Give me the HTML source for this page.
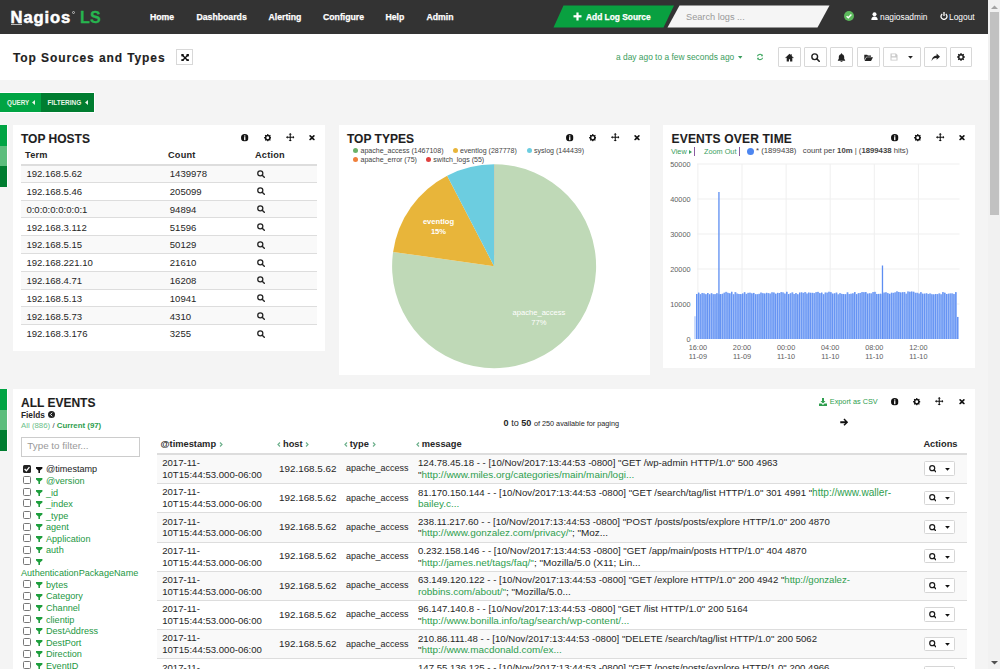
<!DOCTYPE html>
<html><head><meta charset="utf-8">
<style>
*{box-sizing:border-box}
html,body{margin:0;padding:0}
body{width:1000px;height:669px;overflow:hidden;position:relative;background:#f4f4f4;font-family:"Liberation Sans",sans-serif;color:#333}
.a{position:absolute;white-space:nowrap}
#hdr{position:absolute;left:0;top:0;width:988px;height:34px;background:#333}
.nav{position:absolute;top:12px;font-size:8.7px;font-weight:bold;color:#fff;line-height:11px;-webkit-text-stroke:0.25px #fff}
#title{position:absolute;left:0;top:34px;width:988px;height:45.6px;background:#fff}
.tb{position:absolute;top:13px;width:23px;height:20px;border:1px solid #d8d8d8;border-radius:1px;background:#fff}
.panel{position:absolute;background:#fff}
.gbar{position:absolute;left:0;width:7px}
.gbar div{height:20.5px}
.ptitle{position:absolute;font-size:12px;font-weight:bold;color:#1e1e1e;line-height:14px;-webkit-text-stroke:0.1px #1e1e1e}
.pic{position:absolute}
#sb{position:absolute;left:988px;top:0;width:12px;height:669px;background:#f1f1f1}
</style></head>
<body>
<svg width="0" height="0" style="position:absolute">
<defs>
<symbol id="i-info" viewBox="0 0 16 16"><circle cx="8" cy="8" r="8" fill="currentColor"/><rect x="6.6" y="3" width="2.8" height="2.6" fill="#fff"/><rect x="6.6" y="6.6" width="2.8" height="6.6" fill="#fff"/></symbol>
<symbol id="i-gear" viewBox="0 0 16 16"><path fill="currentColor" fill-rule="evenodd" d="M6.63 1.85 L6.96 0.07 L9.04 0.07 L9.37 1.85 L11.38 2.68 L12.88 1.66 L14.34 3.12 L13.32 4.62 L14.15 6.63 L15.93 6.96 L15.93 9.04 L14.15 9.37 L13.32 11.38 L14.34 12.88 L12.88 14.34 L11.38 13.32 L9.37 14.15 L9.04 15.93 L6.96 15.93 L6.63 14.15 L4.62 13.32 L3.12 14.34 L1.66 12.88 L2.68 11.38 L1.85 9.37 L0.07 9.04 L0.07 6.96 L1.85 6.63 L2.68 4.62 L1.66 3.12 L3.12 1.66 L4.62 2.68ZM8 5a3 3 0 1 0 0 6a3 3 0 1 0 0-6z"/></symbol>
<symbol id="i-move" viewBox="0 0 16 16"><path fill="currentColor" d="M8 0l3 3H9v4h4V5l3 3-3 3V9H9v4h2l-3 3-3-3h2V9H3v2L0 8l3-3v2h4V3H5z"/></symbol>
<symbol id="i-times" viewBox="0 0 16 16"><path d="M2.5 2.5L13.5 13.5M13.5 2.5L2.5 13.5" stroke="currentColor" stroke-width="4.6" stroke-linecap="round"/></symbol>
<symbol id="i-search" viewBox="0 0 16 16"><circle cx="6.6" cy="6.6" r="5.1" stroke="currentColor" stroke-width="2.5" fill="none"/><path d="M10.4 10.4l4.2 4.2" stroke="currentColor" stroke-width="2.8" stroke-linecap="round"/></symbol>
<symbol id="i-home" viewBox="0 0 16 16"><path fill="currentColor" d="M8 1.5L0.5 8.3 1.6 9.4 3 8.2V15h4v-4h2v4h4V8.2l1.4 1.2 1.1-1.1L12 5.2V2h-2v1.4z"/></symbol>
<symbol id="i-bell" viewBox="0 0 16 16"><path fill="currentColor" d="M8 0.5c.7 0 1 .4 1 1v.6c2.4.5 3.8 2.5 3.8 5v3.3l1.7 2.4v1H1.5v-1l1.7-2.4V7.1c0-2.5 1.4-4.5 3.8-5v-.6c0-.6.3-1 1-1zM6.2 14.6h3.6A1.8 1.8 0 0 1 6.2 14.6z"/></symbol>
<symbol id="i-folder" viewBox="0 0 16 16"><path fill="currentColor" d="M0.5 3h5l1.5 1.5h5.5v2H4L0.5 13zM4.5 7.5H16l-3.5 6.5H1z"/></symbol>
<symbol id="i-save" viewBox="0 0 16 16"><path fill="currentColor" fill-rule="evenodd" d="M1 1h11l3 3v11H1zM3.5 2.5v4h7v-4zM3 9v4.5h10V9z"/></symbol>
<symbol id="i-share" viewBox="0 0 16 16"><path fill="currentColor" d="M10 1l6 5.5-6 5.5V8.8C5.5 8.5 3 10 1 14.5 1.3 8.5 4.5 4.7 10 4.3z"/></symbol>
<symbol id="i-caret" viewBox="0 0 8 5"><path fill="currentColor" d="M0 0h8L4 4.5z"/></symbol>
<symbol id="i-refresh" viewBox="0 0 16 16"><path fill="currentColor" d="M13.6 2.4V6.6H9.4l1.6-1.6A4.3 4.3 0 0 0 3.9 6.6H1.7A6.4 6.4 0 0 1 12.5 3.5zM2.4 13.6V9.4h4.2L5 11a4.3 4.3 0 0 0 7.1-1.6h2.2a6.4 6.4 0 0 1-10.8 3.1z"/></symbol>
<symbol id="i-expand" viewBox="0 0 16 16"><path d="M3 3L13 13M13 3L3 13" stroke="currentColor" stroke-width="2.8"/><rect x="0" y="0" width="5" height="5" fill="currentColor"/><rect x="11" y="0" width="5" height="5" fill="currentColor"/><rect x="0" y="11" width="5" height="5" fill="currentColor"/><rect x="11" y="11" width="5" height="5" fill="currentColor"/></symbol>
<symbol id="i-filter" viewBox="0 0 16 16"><path fill="currentColor" d="M0.5 1h15v2L10 8.5V15L6 13V8.5L0.5 3z"/></symbol>
<symbol id="i-download" viewBox="0 0 16 16"><path fill="currentColor" d="M6 0h4v6h3l-5 5-5-5h3zM0 11h5l3 3 3-3h5v5H0z"/></symbol>
<symbol id="i-arrow" viewBox="0 0 16 16"><path fill="currentColor" d="M0.5 6.2h9.3L6.6 3 8.6 1l7 7-7 7-2-2 3.2-3.2H0.5z"/></symbol>
<symbol id="i-chev" viewBox="0 0 16 16"><path fill="currentColor" d="M5 1.5L11.5 8 5 14.5 3.2 12.7 7.9 8 3.2 3.3z"/></symbol>
<symbol id="i-circleleft" viewBox="0 0 16 16"><circle cx="8" cy="8" r="8" fill="currentColor"/><path d="M9.5 4L5.5 8l4 4" stroke="#fff" stroke-width="2.2" fill="none"/></symbol>
</defs></svg>
<!-- HEADER -->
<div id="hdr">
  <div class="a" style="left:10.5px;top:7.5px;font-size:16.6px;font-weight:bold;color:#fff;letter-spacing:0.9px;line-height:20px;-webkit-text-stroke:0.5px #fff">Nagios</div>
  <div class="a" style="left:72px;top:10.5px;width:3px;height:3px;border-radius:50%;border:0.8px solid #bbb"></div><div class="a" style="left:11px;top:23.5px;width:11px;height:1px;background:#bbb"></div>
  <div class="a" style="left:80px;top:8px;font-size:16px;font-weight:bold;color:#27b44f;letter-spacing:0.2px;line-height:20px;-webkit-text-stroke:0.3px #27b44f">LS</div>
  <div class="nav a" style="left:150px">Home</div>
  <div class="nav a" style="left:196.5px">Dashboards</div>
  <div class="nav a" style="left:268.5px">Alerting</div>
  <div class="nav a" style="left:323px">Configure</div>
  <div class="nav a" style="left:385.5px">Help</div>
  <div class="nav a" style="left:426.5px">Admin</div>
  <svg class="a" style="left:553px;top:5px" width="280" height="23">
    <polygon points="10.5,0.5 121,0.5 110.5,22.5 0.5,22.5" fill="#09a040"/>
    <polygon points="126.5,0.5 276.5,0.5 264.5,22.5 114.5,22.5" fill="#f5f5f5"/>
    <rect x="20.5" y="10.2" width="8" height="2.2" fill="#fff"/><rect x="23.4" y="7.5" width="2.2" height="8" fill="#fff"/>
  </svg>
  <div class="a" style="left:586px;top:12.3px;font-size:8.4px;font-weight:bold;color:#fff;line-height:11px;-webkit-text-stroke:0.25px #fff">Add Log Source</div>
  <div class="a" style="left:686px;top:10.7px;font-size:9.2px;color:#999;line-height:13px">Search logs ...</div>
  <svg class="a" style="left:844px;top:11px" width="10" height="10"><circle cx="5" cy="5" r="5" fill="#5cb85c"/><path d="M2.6 5.2 L4.3 6.8 L7.4 3.6" stroke="#fff" stroke-width="1.4" fill="none"/></svg>
  <svg class="a" style="left:871px;top:12px" width="7" height="8"><circle cx="3.5" cy="2.2" r="2" fill="#fff"/><path d="M0.3 8 Q0.3 4.5 3.5 4.5 Q6.7 4.5 6.7 8 Z" fill="#fff"/></svg>
  <div class="a" style="left:880px;top:11.5px;font-size:8.4px;color:#fff;line-height:11px">nagiosadmin</div>
  <svg class="a" style="left:940px;top:12px" width="8" height="8"><path d="M2.2 2 A3 3 0 1 0 5.8 2" stroke="#fff" stroke-width="1.3" fill="none"/><rect x="3.35" y="0" width="1.3" height="4" fill="#fff"/></svg>
  <div class="a" style="left:949px;top:11.5px;font-size:8.4px;color:#fff;line-height:11px">Logout</div>
</div>
<!-- TITLE BAR -->
<div id="title">
  <div class="a" style="left:13px;top:17px;font-size:12px;font-weight:bold;color:#1e1e1e;letter-spacing:0.9px;line-height:14px;-webkit-text-stroke:0.15px #1e1e1e">Top Sources and Types</div>
  <div class="a" style="left:176px;top:15px;width:17px;height:16px;border:1px solid #d8d8d8;background:#fff"><svg class="a" style="left:3.8px;top:3.6px;color:#111" width="8.2" height="7.6"><use href="#i-expand"/></svg></div>
  <svg class="a" style="left:738px;top:21.5px;color:#3a9d5d" width="4.5" height="3"><use href="#i-caret"/></svg>
  <svg class="a" style="left:756px;top:19px;color:#3aa55d" width="8" height="8"><use href="#i-refresh"/></svg>
  <div class="tb" style="left:778px"><svg class="a" style="left:6px;top:5px;color:#222" width="9" height="9"><use href="#i-home"/></svg></div>
  <div class="tb" style="left:804px"><svg class="a" style="left:6px;top:5px;color:#222" width="9" height="9"><use href="#i-search"/></svg></div>
  <div class="tb" style="left:830px"><svg class="a" style="left:6px;top:5px;color:#222" width="9" height="9"><use href="#i-bell"/></svg></div>
  <div class="tb" style="left:856.5px"><svg class="a" style="left:6px;top:5px;color:#222" width="9" height="9"><use href="#i-folder"/></svg></div>
  <div class="tb" style="left:883px;width:37.5px"><svg class="a" style="left:6px;top:5px;color:#c8c8c8" width="8" height="8"><use href="#i-save"/></svg><svg class="a" style="left:24px;top:8px;color:#222" width="5" height="3"><use href="#i-caret"/></svg></div>
  <div class="tb" style="left:924px"><svg class="a" style="left:6px;top:5px;color:#222" width="9" height="9"><use href="#i-share"/></svg></div>
  <div class="tb" style="left:950px;width:22px"><svg class="a" style="left:6px;top:5px;color:#222" width="8" height="8"><use href="#i-gear"/></svg></div>
  <div class="a" style="left:616px;top:18px;font-size:8.4px;color:#3a9d5d;line-height:11px">a day ago to a few seconds ago</div>
</div>
<!-- QUERY FILTERING -->
<div class="a" style="left:0;top:92px;width:95px;height:21px;background:#fff"></div>
<div class="a" style="left:0;top:93px;width:41px;height:19px;background:#00a443"></div>
<div class="a" style="left:41px;top:93px;width:53px;height:19px;background:#007d30"></div>
<div class="a" style="left:7px;top:99px;font-size:6.3px;font-weight:bold;color:#e8f5e8;line-height:8px">QUERY</div>
<svg class="a" style="left:32px;top:100px;color:#e8f5e8" width="3" height="5"><path d="M3 0v5L0 2.5z" fill="currentColor"/></svg>
<div class="a" style="left:47.5px;top:99px;font-size:6.5px;font-weight:bold;color:#e8f5e8;line-height:8px">FILTERING</div>
<svg class="a" style="left:85px;top:100px;color:#e8f5e8" width="3" height="5"><path d="M3 0v5L0 2.5z" fill="currentColor"/></svg>
<!-- green side bars -->
<div class="gbar" style="top:124.5px;background:#fff;width:8px;height:62px"></div>
<div class="gbar" style="top:125px;height:61px"><div style="background:#00a443"></div><div style="background:#5cbd7c"></div><div style="background:#007d30"></div></div>
<div class="gbar" style="top:388.5px;background:#fff;width:8px;height:62px"></div>
<div class="gbar" style="top:389px;height:61px"><div style="background:#00a443"></div><div style="background:#5cbd7c"></div><div style="background:#007d30"></div></div>
<!-- PANELS -->
<div class="panel" style="left:13px;top:125px;width:312px;height:226px">
<div class="ptitle a" style="left:8px;top:7px">TOP HOSTS</div>
<svg class="a" style="left:228px;top:9px;color:#111" width="7.5" height="7.5"><use href="#i-info"/></svg><svg class="a" style="left:250.5px;top:9px;color:#111" width="7.5" height="7.5"><use href="#i-gear"/></svg><svg class="a" style="left:273.0px;top:8px;color:#111" width="8.5" height="8.5"><use href="#i-move"/></svg><svg class="a" style="left:296.2px;top:10px;color:#111" width="6" height="5.5"><use href="#i-times"/></svg>
<div class="a" style="left:12px;top:24.5px;font-size:9.2px;font-weight:bold;color:#262626;letter-spacing:0.2px;line-height:11px">Term</div>
<div class="a" style="left:155px;top:24.5px;font-size:9.2px;font-weight:bold;color:#262626;letter-spacing:0.2px;line-height:11px">Count</div>
<div class="a" style="left:242px;top:24.5px;font-size:9.2px;font-weight:bold;color:#262626;letter-spacing:0.2px;line-height:11px">Action</div>
<div class="a" style="left:8px;top:39px;width:296px;height:2px;background:#ddd"></div>
<div class="a" style="left:8px;top:41px;width:296px;height:16px;background:#f9f9f9"></div>
<div class="a" style="left:13.4px;top:43.10px;font-size:9.55px;color:#262626;line-height:11px">192.168.5.62</div>
<div class="a" style="left:156.8px;top:43.10px;font-size:9.55px;color:#262626;line-height:11px">1439978</div>
<svg class="a" style="left:244px;top:44.50px;color:#222" width="8" height="8"><use href="#i-search"/></svg>
<div class="a" style="left:8px;top:56.80px;width:296px;height:17.8px;background:#fff;border-top:1px solid #ddd"></div>
<div class="a" style="left:13.4px;top:60.90px;font-size:9.55px;color:#262626;line-height:11px">192.168.5.46</div>
<div class="a" style="left:156.8px;top:60.90px;font-size:9.55px;color:#262626;line-height:11px">205099</div>
<svg class="a" style="left:244px;top:62.30px;color:#222" width="8" height="8"><use href="#i-search"/></svg>
<div class="a" style="left:8px;top:74.60px;width:296px;height:17.8px;background:#f9f9f9;border-top:1px solid #ddd"></div>
<div class="a" style="left:13.4px;top:78.70px;font-size:9.55px;color:#262626;line-height:11px">0:0:0:0:0:0:0:1</div>
<div class="a" style="left:156.8px;top:78.70px;font-size:9.55px;color:#262626;line-height:11px">94894</div>
<svg class="a" style="left:244px;top:80.10px;color:#222" width="8" height="8"><use href="#i-search"/></svg>
<div class="a" style="left:8px;top:92.40px;width:296px;height:17.8px;background:#fff;border-top:1px solid #ddd"></div>
<div class="a" style="left:13.4px;top:96.50px;font-size:9.55px;color:#262626;line-height:11px">192.168.3.112</div>
<div class="a" style="left:156.8px;top:96.50px;font-size:9.55px;color:#262626;line-height:11px">51596</div>
<svg class="a" style="left:244px;top:97.90px;color:#222" width="8" height="8"><use href="#i-search"/></svg>
<div class="a" style="left:8px;top:110.20px;width:296px;height:17.8px;background:#f9f9f9;border-top:1px solid #ddd"></div>
<div class="a" style="left:13.4px;top:114.30px;font-size:9.55px;color:#262626;line-height:11px">192.168.5.15</div>
<div class="a" style="left:156.8px;top:114.30px;font-size:9.55px;color:#262626;line-height:11px">50129</div>
<svg class="a" style="left:244px;top:115.70px;color:#222" width="8" height="8"><use href="#i-search"/></svg>
<div class="a" style="left:8px;top:128.00px;width:296px;height:17.8px;background:#fff;border-top:1px solid #ddd"></div>
<div class="a" style="left:13.4px;top:132.10px;font-size:9.55px;color:#262626;line-height:11px">192.168.221.10</div>
<div class="a" style="left:156.8px;top:132.10px;font-size:9.55px;color:#262626;line-height:11px">21610</div>
<svg class="a" style="left:244px;top:133.50px;color:#222" width="8" height="8"><use href="#i-search"/></svg>
<div class="a" style="left:8px;top:145.80px;width:296px;height:17.8px;background:#f9f9f9;border-top:1px solid #ddd"></div>
<div class="a" style="left:13.4px;top:149.90px;font-size:9.55px;color:#262626;line-height:11px">192.168.4.71</div>
<div class="a" style="left:156.8px;top:149.90px;font-size:9.55px;color:#262626;line-height:11px">16208</div>
<svg class="a" style="left:244px;top:151.30px;color:#222" width="8" height="8"><use href="#i-search"/></svg>
<div class="a" style="left:8px;top:163.60px;width:296px;height:17.8px;background:#fff;border-top:1px solid #ddd"></div>
<div class="a" style="left:13.4px;top:167.70px;font-size:9.55px;color:#262626;line-height:11px">192.168.5.13</div>
<div class="a" style="left:156.8px;top:167.70px;font-size:9.55px;color:#262626;line-height:11px">10941</div>
<svg class="a" style="left:244px;top:169.10px;color:#222" width="8" height="8"><use href="#i-search"/></svg>
<div class="a" style="left:8px;top:181.40px;width:296px;height:17.8px;background:#f9f9f9;border-top:1px solid #ddd"></div>
<div class="a" style="left:13.4px;top:185.50px;font-size:9.55px;color:#262626;line-height:11px">192.168.5.73</div>
<div class="a" style="left:156.8px;top:185.50px;font-size:9.55px;color:#262626;line-height:11px">4310</div>
<svg class="a" style="left:244px;top:186.90px;color:#222" width="8" height="8"><use href="#i-search"/></svg>
<div class="a" style="left:8px;top:199.20px;width:296px;height:17.8px;background:#fff;border-top:1px solid #ddd"></div>
<div class="a" style="left:13.4px;top:203.30px;font-size:9.55px;color:#262626;line-height:11px">192.168.3.176</div>
<div class="a" style="left:156.8px;top:203.30px;font-size:9.55px;color:#262626;line-height:11px">3255</div>
<svg class="a" style="left:244px;top:204.70px;color:#222" width="8" height="8"><use href="#i-search"/></svg>
</div>
<div class="panel" style="left:339px;top:125px;width:311px;height:250px">
<div class="ptitle a" style="left:8px;top:7px">TOP TYPES</div>
<svg class="a" style="left:227px;top:9px;color:#111" width="7.5" height="7.5"><use href="#i-info"/></svg><svg class="a" style="left:249.5px;top:9px;color:#111" width="7.5" height="7.5"><use href="#i-gear"/></svg><svg class="a" style="left:272.0px;top:8px;color:#111" width="8.5" height="8.5"><use href="#i-move"/></svg><svg class="a" style="left:295.2px;top:10px;color:#111" width="6" height="5.5"><use href="#i-times"/></svg>
<div class="a" style="left:14.0px;top:23.099999999999994px;width:5px;height:5px;border-radius:50%;background:#6ab167"></div>
<div class="a" style="left:21.5px;top:21.099999999999994px;font-size:7.05px;color:#444;line-height:9px">apache_access (1467108)</div>
<div class="a" style="left:113.5px;top:23.099999999999994px;width:5px;height:5px;border-radius:50%;background:#e8b53a"></div>
<div class="a" style="left:121px;top:21.099999999999994px;font-size:7.05px;color:#444;line-height:9px">eventlog (287778)</div>
<div class="a" style="left:187.5px;top:23.099999999999994px;width:5px;height:5px;border-radius:50%;background:#6ccde0"></div>
<div class="a" style="left:195px;top:21.099999999999994px;font-size:7.05px;color:#444;line-height:9px">syslog (144439)</div>
<div class="a" style="left:14.0px;top:31.80000000000001px;width:5px;height:5px;border-radius:50%;background:#f07f3b"></div>
<div class="a" style="left:21.5px;top:29.80000000000001px;font-size:7.05px;color:#444;line-height:9px">apache_error (75)</div>
<div class="a" style="left:86.80000000000001px;top:31.80000000000001px;width:5px;height:5px;border-radius:50%;background:#e0413f"></div>
<div class="a" style="left:94.30000000000001px;top:29.80000000000001px;font-size:7.05px;color:#444;line-height:9px">switch_logs (55)</div>
<svg class="a" style="left:0;top:0" width="311" height="250"><path d="M155.10,141.20 L155.10,39.20 A102,102 0 1 1 54.11,126.90 Z" fill="#bfd9b7"/><path d="M155.10,141.20 L54.11,126.90 A102,102 0 0 1 108.16,50.64 Z" fill="#e8b53a"/><path d="M155.10,141.20 L108.16,50.64 A102,102 0 0 1 155.06,39.20 Z" fill="#6ccde0"/><path d="M155.10,141.20 L155.06,39.20 A102,102 0 0 1 155.08,39.20 Z" fill="#f07f3b"/><path d="M155.10,141.20 L155.08,39.20 A102,102 0 0 1 155.10,39.20 Z" fill="#e0413f"/></svg>
<div class="a" style="left:69.5px;width:60px;text-align:center;top:91.80000000000001px;font-size:7.6px;font-weight:bold;color:#fff;line-height:10px">eventlog<br>15%</div>
<div class="a" style="left:159.89999999999998px;width:80px;text-align:center;top:182.89999999999998px;font-size:7.6px;color:#fff;line-height:10px">apache_access<br>77%</div>
</div>
<div class="panel" style="left:663px;top:125px;width:312px;height:243px">
<div class="ptitle a" style="left:8.5px;top:7px;letter-spacing:0.2px">EVENTS OVER TIME</div>
<svg class="a" style="left:228px;top:9px;color:#111" width="7.5" height="7.5"><use href="#i-info"/></svg><svg class="a" style="left:250.5px;top:9px;color:#111" width="7.5" height="7.5"><use href="#i-gear"/></svg><svg class="a" style="left:273.0px;top:8px;color:#111" width="8.5" height="8.5"><use href="#i-move"/></svg><svg class="a" style="left:296.2px;top:10px;color:#111" width="6" height="5.5"><use href="#i-times"/></svg>
<div class="a" style="left:8px;top:22px;font-size:7.3px;color:#3a9d5d;line-height:9px">View</div>
<svg class="a" style="left:25.5px;top:24.5px;color:#3a9d5d" width="3" height="4"><path d="M0 0v4l3-2z" fill="currentColor"/></svg>
<div class="a" style="left:30.8px;top:22px;width:1px;height:9px;background:#8a5aa0"></div>
<div class="a" style="left:41px;top:22px;font-size:7.3px;color:#3a9d5d;line-height:9px">Zoom Out</div>
<div class="a" style="left:76px;top:22px;width:1px;height:9px;background:#8a5aa0"></div>
<div class="a" style="left:83.5px;top:23px;width:7px;height:7px;border-radius:50%;background:#4d86f0"></div>
<div class="a" style="left:93px;top:21.3px;font-size:7.73px;color:#444;line-height:9px">* (1899438) &nbsp; count per <b>10m</b> | (<b>1899438</b> hits)</div>
<svg class="a" style="left:0;top:0" width="312" height="243"><line x1="34" y1="179.0" x2="296.5" y2="179.0" stroke="#efefef" stroke-width="1"/><line x1="34" y1="144.0" x2="296.5" y2="144.0" stroke="#efefef" stroke-width="1"/><line x1="34" y1="109.0" x2="296.5" y2="109.0" stroke="#efefef" stroke-width="1"/><line x1="34" y1="74.0" x2="296.5" y2="74.0" stroke="#efefef" stroke-width="1"/><line x1="34" y1="39.0" x2="296.5" y2="39.0" stroke="#efefef" stroke-width="1"/><line x1="34.9" y1="39.0" x2="34.9" y2="214" stroke="#efefef" stroke-width="1"/><line x1="79.0" y1="39.0" x2="79.0" y2="214" stroke="#efefef" stroke-width="1"/><line x1="123.1" y1="39.0" x2="123.1" y2="214" stroke="#efefef" stroke-width="1"/><line x1="167.2" y1="39.0" x2="167.2" y2="214" stroke="#efefef" stroke-width="1"/><line x1="211.3" y1="39.0" x2="211.3" y2="214" stroke="#efefef" stroke-width="1"/><line x1="255.4" y1="39.0" x2="255.4" y2="214" stroke="#efefef" stroke-width="1"/><g fill="#97b7f8"><rect x="31.50" y="191.25" width="1" height="22.75"/><rect x="33.04" y="168.98" width="1.84" height="45.02"/><rect x="34.88" y="167.67" width="1.84" height="46.33"/><rect x="36.71" y="169.18" width="1.84" height="44.82"/><rect x="38.55" y="167.97" width="1.84" height="46.03"/><rect x="40.39" y="168.42" width="1.84" height="45.58"/><rect x="42.23" y="169.22" width="1.84" height="44.78"/><rect x="44.06" y="168.04" width="1.84" height="45.96"/><rect x="45.90" y="169.28" width="1.84" height="44.72"/><rect x="47.74" y="168.24" width="1.84" height="45.76"/><rect x="49.58" y="169.19" width="1.84" height="44.81"/><rect x="51.41" y="169.14" width="1.84" height="44.86"/><rect x="53.25" y="168.26" width="1.84" height="45.74"/><rect x="55.09" y="169.20" width="1.84" height="44.80"/><rect x="56.93" y="169.05" width="1.84" height="44.95"/><rect x="58.76" y="168.79" width="1.84" height="45.21"/><rect x="60.60" y="167.73" width="1.84" height="46.27"/><rect x="62.44" y="166.89" width="1.84" height="47.11"/><rect x="64.28" y="167.86" width="1.84" height="46.14"/><rect x="66.11" y="168.33" width="1.84" height="45.67"/><rect x="67.95" y="166.81" width="1.84" height="47.19"/><rect x="69.79" y="169.25" width="1.84" height="44.75"/><rect x="71.63" y="167.12" width="1.84" height="46.88"/><rect x="73.46" y="168.61" width="1.84" height="45.39"/><rect x="75.30" y="169.00" width="1.84" height="45.00"/><rect x="77.14" y="169.07" width="1.84" height="44.93"/><rect x="78.98" y="168.57" width="1.84" height="45.43"/><rect x="80.81" y="167.23" width="1.84" height="46.77"/><rect x="82.65" y="168.90" width="1.84" height="45.10"/><rect x="84.49" y="167.85" width="1.84" height="46.15"/><rect x="86.33" y="167.70" width="1.84" height="46.30"/><rect x="88.16" y="168.40" width="1.84" height="45.60"/><rect x="90.00" y="167.94" width="1.84" height="46.06"/><rect x="91.84" y="169.21" width="1.84" height="44.79"/><rect x="93.68" y="169.22" width="1.84" height="44.78"/><rect x="95.51" y="168.83" width="1.84" height="45.17"/><rect x="97.35" y="167.59" width="1.84" height="46.41"/><rect x="99.19" y="168.25" width="1.84" height="45.75"/><rect x="101.03" y="168.55" width="1.84" height="45.45"/><rect x="102.86" y="167.84" width="1.84" height="46.16"/><rect x="104.70" y="168.19" width="1.84" height="45.81"/><rect x="106.54" y="168.59" width="1.84" height="45.41"/><rect x="108.38" y="167.29" width="1.84" height="46.71"/><rect x="110.21" y="167.54" width="1.84" height="46.46"/><rect x="112.05" y="168.73" width="1.84" height="45.27"/><rect x="113.89" y="167.87" width="1.84" height="46.13"/><rect x="115.73" y="168.00" width="1.84" height="46.00"/><rect x="117.56" y="167.08" width="1.84" height="46.92"/><rect x="119.40" y="167.46" width="1.84" height="46.54"/><rect x="121.24" y="168.62" width="1.84" height="45.38"/><rect x="123.08" y="166.80" width="1.84" height="47.20"/><rect x="124.91" y="169.07" width="1.84" height="44.93"/><rect x="126.75" y="168.28" width="1.84" height="45.72"/><rect x="128.59" y="167.39" width="1.84" height="46.61"/><rect x="130.43" y="168.98" width="1.84" height="45.02"/><rect x="132.26" y="168.09" width="1.84" height="45.91"/><rect x="134.10" y="169.27" width="1.84" height="44.73"/><rect x="135.94" y="167.62" width="1.84" height="46.38"/><rect x="137.78" y="167.37" width="1.84" height="46.63"/><rect x="139.61" y="167.87" width="1.84" height="46.13"/><rect x="141.45" y="167.08" width="1.84" height="46.92"/><rect x="143.29" y="168.55" width="1.84" height="45.45"/><rect x="145.13" y="167.55" width="1.84" height="46.45"/><rect x="146.96" y="167.81" width="1.84" height="46.19"/><rect x="148.80" y="167.85" width="1.84" height="46.15"/><rect x="150.64" y="168.18" width="1.84" height="45.82"/><rect x="152.48" y="167.17" width="1.84" height="46.83"/><rect x="154.31" y="166.90" width="1.84" height="47.10"/><rect x="156.15" y="168.13" width="1.84" height="45.87"/><rect x="157.99" y="167.63" width="1.84" height="46.37"/><rect x="159.83" y="169.22" width="1.84" height="44.78"/><rect x="161.66" y="167.53" width="1.84" height="46.47"/><rect x="163.50" y="167.68" width="1.84" height="46.32"/><rect x="165.34" y="166.77" width="1.84" height="47.23"/><rect x="167.18" y="167.22" width="1.84" height="46.78"/><rect x="169.01" y="168.63" width="1.84" height="45.37"/><rect x="170.85" y="168.36" width="1.84" height="45.64"/><rect x="172.69" y="167.62" width="1.84" height="46.38"/><rect x="174.53" y="169.32" width="1.84" height="44.68"/><rect x="176.36" y="168.16" width="1.84" height="45.84"/><rect x="178.20" y="168.93" width="1.84" height="45.07"/><rect x="180.04" y="169.07" width="1.84" height="44.93"/><rect x="181.88" y="169.22" width="1.84" height="44.78"/><rect x="183.71" y="167.36" width="1.84" height="46.64"/><rect x="185.55" y="169.04" width="1.84" height="44.96"/><rect x="187.39" y="168.73" width="1.84" height="45.27"/><rect x="189.23" y="168.35" width="1.84" height="45.65"/><rect x="191.06" y="167.09" width="1.84" height="46.91"/><rect x="192.90" y="169.16" width="1.84" height="44.84"/><rect x="194.74" y="168.20" width="1.84" height="45.80"/><rect x="196.58" y="167.93" width="1.84" height="46.07"/><rect x="198.41" y="167.06" width="1.84" height="46.94"/><rect x="200.25" y="167.22" width="1.84" height="46.78"/><rect x="202.09" y="167.11" width="1.84" height="46.89"/><rect x="203.93" y="168.64" width="1.84" height="45.36"/><rect x="205.76" y="168.28" width="1.84" height="45.72"/><rect x="207.60" y="168.43" width="1.84" height="45.57"/><rect x="209.44" y="167.05" width="1.84" height="46.95"/><rect x="211.28" y="166.86" width="1.84" height="47.14"/><rect x="213.11" y="168.98" width="1.84" height="45.02"/><rect x="214.95" y="168.91" width="1.84" height="45.09"/><rect x="216.79" y="168.77" width="1.84" height="45.23"/><rect x="218.63" y="169.20" width="1.84" height="44.80"/><rect x="220.46" y="167.58" width="1.84" height="46.42"/><rect x="222.30" y="167.30" width="1.84" height="46.70"/><rect x="224.14" y="168.16" width="1.84" height="45.84"/><rect x="225.98" y="168.84" width="1.84" height="45.16"/><rect x="227.81" y="167.75" width="1.84" height="46.25"/><rect x="229.65" y="167.88" width="1.84" height="46.12"/><rect x="231.49" y="167.36" width="1.84" height="46.64"/><rect x="233.33" y="166.35" width="1.84" height="47.65"/><rect x="235.16" y="167.04" width="1.84" height="46.96"/><rect x="237.00" y="167.50" width="1.84" height="46.50"/><rect x="238.84" y="167.23" width="1.84" height="46.77"/><rect x="240.68" y="167.07" width="1.84" height="46.93"/><rect x="242.51" y="168.71" width="1.84" height="45.29"/><rect x="244.35" y="166.49" width="1.84" height="47.51"/><rect x="246.19" y="166.80" width="1.84" height="47.20"/><rect x="248.03" y="166.55" width="1.84" height="47.45"/><rect x="249.86" y="166.76" width="1.84" height="47.24"/><rect x="251.70" y="167.82" width="1.84" height="46.18"/><rect x="253.54" y="167.80" width="1.84" height="46.20"/><rect x="255.38" y="168.58" width="1.84" height="45.42"/><rect x="257.21" y="167.18" width="1.84" height="46.82"/><rect x="259.05" y="168.69" width="1.84" height="45.31"/><rect x="260.89" y="168.67" width="1.84" height="45.33"/><rect x="262.73" y="168.30" width="1.84" height="45.70"/><rect x="264.56" y="168.95" width="1.84" height="45.05"/><rect x="266.40" y="168.48" width="1.84" height="45.52"/><rect x="268.24" y="169.24" width="1.84" height="44.76"/><rect x="270.08" y="169.37" width="1.84" height="44.63"/><rect x="271.91" y="168.98" width="1.84" height="45.02"/><rect x="273.75" y="169.11" width="1.84" height="44.89"/><rect x="275.59" y="168.42" width="1.84" height="45.58"/><rect x="277.43" y="169.31" width="1.84" height="44.69"/><rect x="279.26" y="167.08" width="1.84" height="46.92"/><rect x="281.10" y="167.76" width="1.84" height="46.24"/><rect x="282.94" y="168.99" width="1.84" height="45.01"/><rect x="284.78" y="168.71" width="1.84" height="45.29"/><rect x="286.61" y="168.46" width="1.84" height="45.54"/><rect x="288.45" y="168.42" width="1.84" height="45.58"/><rect x="290.29" y="169.05" width="1.84" height="44.95"/><rect x="292.13" y="167.15" width="1.84" height="46.85"/><rect x="293.96" y="191.95" width="1.84" height="22.05"/></g><g fill="#5d8ef2"><rect x="33.14" y="168.98" width="0.85" height="45.02"/><rect x="34.98" y="167.67" width="0.85" height="46.33"/><rect x="36.81" y="169.18" width="0.85" height="44.82"/><rect x="38.65" y="167.97" width="0.85" height="46.03"/><rect x="40.49" y="168.42" width="0.85" height="45.58"/><rect x="42.33" y="169.22" width="0.85" height="44.78"/><rect x="44.16" y="168.04" width="0.85" height="45.96"/><rect x="46.00" y="169.28" width="0.85" height="44.72"/><rect x="47.84" y="168.24" width="0.85" height="45.76"/><rect x="49.68" y="169.19" width="0.85" height="44.81"/><rect x="51.51" y="169.14" width="0.85" height="44.86"/><rect x="53.35" y="168.26" width="0.85" height="45.74"/><rect x="55.29" y="67.00" width="1.3" height="147.00"/><rect x="57.03" y="169.05" width="0.85" height="44.95"/><rect x="58.86" y="168.79" width="0.85" height="45.21"/><rect x="60.70" y="167.73" width="0.85" height="46.27"/><rect x="62.54" y="166.89" width="0.85" height="47.11"/><rect x="64.38" y="167.86" width="0.85" height="46.14"/><rect x="66.21" y="168.33" width="0.85" height="45.67"/><rect x="68.05" y="166.81" width="0.85" height="47.19"/><rect x="69.89" y="169.25" width="0.85" height="44.75"/><rect x="71.73" y="167.12" width="0.85" height="46.88"/><rect x="73.56" y="168.61" width="0.85" height="45.39"/><rect x="75.40" y="169.00" width="0.85" height="45.00"/><rect x="77.24" y="169.07" width="0.85" height="44.93"/><rect x="79.08" y="168.57" width="0.85" height="45.43"/><rect x="80.91" y="167.23" width="0.85" height="46.77"/><rect x="82.75" y="168.90" width="0.85" height="45.10"/><rect x="84.59" y="167.85" width="0.85" height="46.15"/><rect x="86.43" y="167.70" width="0.85" height="46.30"/><rect x="88.26" y="168.40" width="0.85" height="45.60"/><rect x="90.10" y="167.94" width="0.85" height="46.06"/><rect x="91.94" y="169.21" width="0.85" height="44.79"/><rect x="93.78" y="169.22" width="0.85" height="44.78"/><rect x="95.61" y="168.83" width="0.85" height="45.17"/><rect x="97.45" y="167.59" width="0.85" height="46.41"/><rect x="99.29" y="168.25" width="0.85" height="45.75"/><rect x="101.13" y="168.55" width="0.85" height="45.45"/><rect x="102.96" y="167.84" width="0.85" height="46.16"/><rect x="104.80" y="168.19" width="0.85" height="45.81"/><rect x="106.64" y="168.59" width="0.85" height="45.41"/><rect x="108.48" y="167.29" width="0.85" height="46.71"/><rect x="110.31" y="167.54" width="0.85" height="46.46"/><rect x="112.15" y="168.73" width="0.85" height="45.27"/><rect x="113.99" y="167.87" width="0.85" height="46.13"/><rect x="115.83" y="168.00" width="0.85" height="46.00"/><rect x="117.66" y="167.08" width="0.85" height="46.92"/><rect x="119.50" y="167.46" width="0.85" height="46.54"/><rect x="121.34" y="168.62" width="0.85" height="45.38"/><rect x="123.18" y="166.80" width="0.85" height="47.20"/><rect x="125.01" y="169.07" width="0.85" height="44.93"/><rect x="126.85" y="168.28" width="0.85" height="45.72"/><rect x="128.69" y="167.39" width="0.85" height="46.61"/><rect x="130.53" y="168.98" width="0.85" height="45.02"/><rect x="132.36" y="168.09" width="0.85" height="45.91"/><rect x="134.20" y="169.27" width="0.85" height="44.73"/><rect x="136.04" y="167.62" width="0.85" height="46.38"/><rect x="137.88" y="167.37" width="0.85" height="46.63"/><rect x="139.71" y="167.87" width="0.85" height="46.13"/><rect x="141.55" y="167.08" width="0.85" height="46.92"/><rect x="143.39" y="168.55" width="0.85" height="45.45"/><rect x="145.23" y="167.55" width="0.85" height="46.45"/><rect x="147.06" y="167.81" width="0.85" height="46.19"/><rect x="148.90" y="167.85" width="0.85" height="46.15"/><rect x="150.74" y="168.18" width="0.85" height="45.82"/><rect x="152.58" y="167.17" width="0.85" height="46.83"/><rect x="154.41" y="166.90" width="0.85" height="47.10"/><rect x="156.25" y="168.13" width="0.85" height="45.87"/><rect x="158.09" y="167.63" width="0.85" height="46.37"/><rect x="159.93" y="169.22" width="0.85" height="44.78"/><rect x="161.76" y="167.53" width="0.85" height="46.47"/><rect x="163.60" y="167.68" width="0.85" height="46.32"/><rect x="165.44" y="166.77" width="0.85" height="47.23"/><rect x="167.28" y="167.22" width="0.85" height="46.78"/><rect x="169.11" y="168.63" width="0.85" height="45.37"/><rect x="170.95" y="168.36" width="0.85" height="45.64"/><rect x="172.79" y="167.62" width="0.85" height="46.38"/><rect x="174.63" y="169.32" width="0.85" height="44.68"/><rect x="176.46" y="168.16" width="0.85" height="45.84"/><rect x="178.30" y="168.93" width="0.85" height="45.07"/><rect x="180.14" y="169.07" width="0.85" height="44.93"/><rect x="181.98" y="169.22" width="0.85" height="44.78"/><rect x="183.81" y="167.36" width="0.85" height="46.64"/><rect x="185.65" y="169.04" width="0.85" height="44.96"/><rect x="187.49" y="168.73" width="0.85" height="45.27"/><rect x="189.33" y="168.35" width="0.85" height="45.65"/><rect x="191.16" y="167.09" width="0.85" height="46.91"/><rect x="193.00" y="169.16" width="0.85" height="44.84"/><rect x="194.84" y="168.20" width="0.85" height="45.80"/><rect x="196.68" y="167.93" width="0.85" height="46.07"/><rect x="198.51" y="167.06" width="0.85" height="46.94"/><rect x="200.35" y="167.22" width="0.85" height="46.78"/><rect x="202.19" y="167.11" width="0.85" height="46.89"/><rect x="204.03" y="168.64" width="0.85" height="45.36"/><rect x="205.86" y="168.28" width="0.85" height="45.72"/><rect x="207.70" y="168.43" width="0.85" height="45.57"/><rect x="209.54" y="167.05" width="0.85" height="46.95"/><rect x="211.38" y="166.86" width="0.85" height="47.14"/><rect x="213.21" y="168.98" width="0.85" height="45.02"/><rect x="215.05" y="168.91" width="0.85" height="45.09"/><rect x="216.89" y="168.77" width="0.85" height="45.23"/><rect x="218.83" y="140.50" width="1.3" height="73.50"/><rect x="220.56" y="167.58" width="0.85" height="46.42"/><rect x="222.40" y="167.30" width="0.85" height="46.70"/><rect x="224.24" y="168.16" width="0.85" height="45.84"/><rect x="226.08" y="168.84" width="0.85" height="45.16"/><rect x="227.91" y="167.75" width="0.85" height="46.25"/><rect x="229.75" y="167.88" width="0.85" height="46.12"/><rect x="231.59" y="167.36" width="0.85" height="46.64"/><rect x="233.43" y="166.35" width="0.85" height="47.65"/><rect x="235.26" y="167.04" width="0.85" height="46.96"/><rect x="237.10" y="167.50" width="0.85" height="46.50"/><rect x="238.94" y="167.23" width="0.85" height="46.77"/><rect x="240.78" y="167.07" width="0.85" height="46.93"/><rect x="242.61" y="168.71" width="0.85" height="45.29"/><rect x="244.45" y="166.49" width="0.85" height="47.51"/><rect x="246.29" y="166.80" width="0.85" height="47.20"/><rect x="248.13" y="166.55" width="0.85" height="47.45"/><rect x="249.96" y="166.76" width="0.85" height="47.24"/><rect x="251.80" y="167.82" width="0.85" height="46.18"/><rect x="253.64" y="167.80" width="0.85" height="46.20"/><rect x="255.48" y="168.58" width="0.85" height="45.42"/><rect x="257.31" y="167.18" width="0.85" height="46.82"/><rect x="259.15" y="168.69" width="0.85" height="45.31"/><rect x="260.99" y="168.67" width="0.85" height="45.33"/><rect x="262.83" y="168.30" width="0.85" height="45.70"/><rect x="264.66" y="168.95" width="0.85" height="45.05"/><rect x="266.50" y="168.48" width="0.85" height="45.52"/><rect x="268.34" y="169.24" width="0.85" height="44.76"/><rect x="270.18" y="169.37" width="0.85" height="44.63"/><rect x="272.01" y="168.98" width="0.85" height="45.02"/><rect x="273.85" y="169.11" width="0.85" height="44.89"/><rect x="275.69" y="168.42" width="0.85" height="45.58"/><rect x="277.53" y="169.31" width="0.85" height="44.69"/><rect x="279.36" y="167.08" width="0.85" height="46.92"/><rect x="281.20" y="167.76" width="0.85" height="46.24"/><rect x="283.04" y="168.99" width="0.85" height="45.01"/><rect x="284.88" y="168.71" width="0.85" height="45.29"/><rect x="286.71" y="168.46" width="0.85" height="45.54"/><rect x="288.55" y="168.42" width="0.85" height="45.58"/><rect x="290.39" y="169.05" width="0.85" height="44.95"/><rect x="292.23" y="167.15" width="0.85" height="46.85"/><rect x="294.06" y="191.95" width="0.85" height="22.05"/></g></svg>
<div class="a" style="right:284.5px;top:210.0px;font-size:7.3px;color:#606060;line-height:10px;text-align:right">0</div>
<div class="a" style="right:284.5px;top:175.0px;font-size:7.3px;color:#606060;line-height:10px;text-align:right">10000</div>
<div class="a" style="right:284.5px;top:140.0px;font-size:7.3px;color:#606060;line-height:10px;text-align:right">20000</div>
<div class="a" style="right:284.5px;top:105.0px;font-size:7.3px;color:#606060;line-height:10px;text-align:right">30000</div>
<div class="a" style="right:284.5px;top:70.0px;font-size:7.3px;color:#606060;line-height:10px;text-align:right">40000</div>
<div class="a" style="right:284.5px;top:35.0px;font-size:7.3px;color:#606060;line-height:10px;text-align:right">50000</div>
<div class="a" style="left:14.9px;width:40px;text-align:center;top:217.8px;font-size:7.3px;color:#606060;line-height:9px">16:00<br>11-09</div>
<div class="a" style="left:59.0px;width:40px;text-align:center;top:217.8px;font-size:7.3px;color:#606060;line-height:9px">20:00<br>11-09</div>
<div class="a" style="left:103.1px;width:40px;text-align:center;top:217.8px;font-size:7.3px;color:#606060;line-height:9px">00:00<br>11-10</div>
<div class="a" style="left:147.2px;width:40px;text-align:center;top:217.8px;font-size:7.3px;color:#606060;line-height:9px">04:00<br>11-10</div>
<div class="a" style="left:191.3px;width:40px;text-align:center;top:217.8px;font-size:7.3px;color:#606060;line-height:9px">08:00<br>11-10</div>
<div class="a" style="left:235.4px;width:40px;text-align:center;top:217.8px;font-size:7.3px;color:#606060;line-height:9px">12:00<br>11-10</div>
</div>
<!-- /PANELS -->
<!-- P4 -->
<div class="panel" style="left:13px;top:389px;width:962px;height:290px">
<div class="ptitle a" style="left:8px;top:7px">ALL EVENTS</div>
<svg class="a" style="left:806px;top:8.5px;color:#2e9e4e" width="8" height="8"><use href="#i-download"/></svg>
<div class="a" style="left:816.8px;top:8px;font-size:7.3px;color:#2e9e4e;line-height:9px">Export as CSV</div>
<svg class="a" style="left:878px;top:9px;color:#111" width="7.5" height="7.5"><use href="#i-info"/></svg>
<svg class="a" style="left:900.3px;top:9px;color:#111" width="7.5" height="7.5"><use href="#i-gear"/></svg>
<svg class="a" style="left:922px;top:8px;color:#111" width="8.5" height="8.5"><use href="#i-move"/></svg>
<svg class="a" style="left:945.8px;top:10px;color:#111" width="6" height="5.5"><use href="#i-times"/></svg>
<div class="a" style="left:8px;top:21px;font-size:8.3px;font-weight:bold;color:#262626;line-height:10px">Fields</div>
<svg class="a" style="left:34.7px;top:22px;color:#222" width="7" height="7"><use href="#i-circleleft"/></svg>
<div class="a" style="left:8px;top:31.600000000000023px;font-size:7.85px;color:#6cc08a;line-height:9px">All (886) <span style="color:#444">/</span> <b style="color:#2e9e4e">Current (97)</b></div>
<div class="a" style="left:8px;top:47.5px;width:119px;height:20px;border:1px solid #ccc;background:#fff"></div>
<div class="a" style="left:14.3px;top:51.19999999999999px;font-size:9.85px;color:#999;line-height:11px">Type to filter...</div>
<div class="a" style="left:10.2px;top:75.80000000000001px;width:8px;height:8px;border-radius:1.5px;background:#222"><svg class="a" style="left:1px;top:1px" width="6" height="6"><path d="M0.6 3 L2.4 4.8 L5.4 1.2" stroke="#fff" stroke-width="1.3" fill="none"/></svg></div>
<svg class="a" style="left:23.200000000000003px;top:77.60000000000002px;color:#111" width="6.4" height="6"><path d="M0 0h6.4v1.4L4 3.6V6H2.4V3.6L0 1.4z" fill="currentColor"/></svg>
<div class="a" style="left:33px;top:74.40000000000003px;font-size:9.1px;color:#1a1a1a;line-height:12px">@timestamp</div>
<div class="a" style="left:10.2px;top:87.35000000000002px;width:8px;height:8px;border-radius:1.5px;border:1px solid #777;background:#fff"></div>
<svg class="a" style="left:23.200000000000003px;top:89.15000000000003px;color:#1e9e3e" width="6.4" height="6"><path d="M0 0h6.4v1.4L4 3.6V6H2.4V3.6L0 1.4z" fill="currentColor"/></svg>
<div class="a" style="left:33px;top:85.95000000000005px;font-size:9.1px;color:#23973f;line-height:12px">@version</div>
<div class="a" style="left:10.2px;top:98.90000000000003px;width:8px;height:8px;border-radius:1.5px;border:1px solid #777;background:#fff"></div>
<svg class="a" style="left:23.200000000000003px;top:100.70000000000005px;color:#1e9e3e" width="6.4" height="6"><path d="M0 0h6.4v1.4L4 3.6V6H2.4V3.6L0 1.4z" fill="currentColor"/></svg>
<div class="a" style="left:33px;top:97.50000000000006px;font-size:9.1px;color:#23973f;line-height:12px">_id</div>
<div class="a" style="left:10.2px;top:110.45000000000005px;width:8px;height:8px;border-radius:1.5px;border:1px solid #777;background:#fff"></div>
<svg class="a" style="left:23.200000000000003px;top:112.25000000000006px;color:#1e9e3e" width="6.4" height="6"><path d="M0 0h6.4v1.4L4 3.6V6H2.4V3.6L0 1.4z" fill="currentColor"/></svg>
<div class="a" style="left:33px;top:109.05000000000007px;font-size:9.1px;color:#23973f;line-height:12px">_index</div>
<div class="a" style="left:10.2px;top:122.0px;width:8px;height:8px;border-radius:1.5px;border:1px solid #777;background:#fff"></div>
<svg class="a" style="left:23.200000000000003px;top:123.79999999999995px;color:#1e9e3e" width="6.4" height="6"><path d="M0 0h6.4v1.4L4 3.6V6H2.4V3.6L0 1.4z" fill="currentColor"/></svg>
<div class="a" style="left:33px;top:120.60000000000002px;font-size:9.1px;color:#23973f;line-height:12px">_type</div>
<div class="a" style="left:10.2px;top:133.54999999999995px;width:8px;height:8px;border-radius:1.5px;border:1px solid #777;background:#fff"></div>
<svg class="a" style="left:23.200000000000003px;top:135.3499999999999px;color:#1e9e3e" width="6.4" height="6"><path d="M0 0h6.4v1.4L4 3.6V6H2.4V3.6L0 1.4z" fill="currentColor"/></svg>
<div class="a" style="left:33px;top:132.14999999999998px;font-size:9.1px;color:#23973f;line-height:12px">agent</div>
<div class="a" style="left:10.2px;top:145.10000000000002px;width:8px;height:8px;border-radius:1.5px;border:1px solid #777;background:#fff"></div>
<svg class="a" style="left:23.200000000000003px;top:146.89999999999998px;color:#1e9e3e" width="6.4" height="6"><path d="M0 0h6.4v1.4L4 3.6V6H2.4V3.6L0 1.4z" fill="currentColor"/></svg>
<div class="a" style="left:33px;top:143.70000000000005px;font-size:9.1px;color:#23973f;line-height:12px">Application</div>
<div class="a" style="left:10.2px;top:156.64999999999998px;width:8px;height:8px;border-radius:1.5px;border:1px solid #777;background:#fff"></div>
<svg class="a" style="left:23.200000000000003px;top:158.44999999999993px;color:#1e9e3e" width="6.4" height="6"><path d="M0 0h6.4v1.4L4 3.6V6H2.4V3.6L0 1.4z" fill="currentColor"/></svg>
<div class="a" style="left:33px;top:155.25px;font-size:9.1px;color:#23973f;line-height:12px">auth</div>
<div class="a" style="left:10.2px;top:168.20000000000005px;width:8px;height:8px;border-radius:1.5px;border:1px solid #777;background:#fff"></div>
<svg class="a" style="left:23.200000000000003px;top:170.0px;color:#1e9e3e" width="6.4" height="6"><path d="M0 0h6.4v1.4L4 3.6V6H2.4V3.6L0 1.4z" fill="currentColor"/></svg>
<div class="a" style="left:8px;top:178.35000000000002px;font-size:9.1px;color:#23973f;line-height:12px">AuthenticationPackageName</div>
<div class="a" style="left:10.2px;top:191.29999999999995px;width:8px;height:8px;border-radius:1.5px;border:1px solid #777;background:#fff"></div>
<svg class="a" style="left:23.200000000000003px;top:193.0999999999999px;color:#1e9e3e" width="6.4" height="6"><path d="M0 0h6.4v1.4L4 3.6V6H2.4V3.6L0 1.4z" fill="currentColor"/></svg>
<div class="a" style="left:33px;top:189.89999999999998px;font-size:9.1px;color:#23973f;line-height:12px">bytes</div>
<div class="a" style="left:10.2px;top:202.85000000000002px;width:8px;height:8px;border-radius:1.5px;border:1px solid #777;background:#fff"></div>
<svg class="a" style="left:23.200000000000003px;top:204.64999999999998px;color:#1e9e3e" width="6.4" height="6"><path d="M0 0h6.4v1.4L4 3.6V6H2.4V3.6L0 1.4z" fill="currentColor"/></svg>
<div class="a" style="left:33px;top:201.45000000000005px;font-size:9.1px;color:#23973f;line-height:12px">Category</div>
<div class="a" style="left:10.2px;top:214.4000000000001px;width:8px;height:8px;border-radius:1.5px;border:1px solid #777;background:#fff"></div>
<svg class="a" style="left:23.200000000000003px;top:216.20000000000005px;color:#1e9e3e" width="6.4" height="6"><path d="M0 0h6.4v1.4L4 3.6V6H2.4V3.6L0 1.4z" fill="currentColor"/></svg>
<div class="a" style="left:33px;top:213.0000000000001px;font-size:9.1px;color:#23973f;line-height:12px">Channel</div>
<div class="a" style="left:10.2px;top:225.95000000000005px;width:8px;height:8px;border-radius:1.5px;border:1px solid #777;background:#fff"></div>
<svg class="a" style="left:23.200000000000003px;top:227.75px;color:#1e9e3e" width="6.4" height="6"><path d="M0 0h6.4v1.4L4 3.6V6H2.4V3.6L0 1.4z" fill="currentColor"/></svg>
<div class="a" style="left:33px;top:224.55000000000007px;font-size:9.1px;color:#23973f;line-height:12px">clientip</div>
<div class="a" style="left:10.2px;top:237.5px;width:8px;height:8px;border-radius:1.5px;border:1px solid #777;background:#fff"></div>
<svg class="a" style="left:23.200000000000003px;top:239.29999999999995px;color:#1e9e3e" width="6.4" height="6"><path d="M0 0h6.4v1.4L4 3.6V6H2.4V3.6L0 1.4z" fill="currentColor"/></svg>
<div class="a" style="left:33px;top:236.10000000000002px;font-size:9.1px;color:#23973f;line-height:12px">DestAddress</div>
<div class="a" style="left:10.2px;top:249.04999999999995px;width:8px;height:8px;border-radius:1.5px;border:1px solid #777;background:#fff"></div>
<svg class="a" style="left:23.200000000000003px;top:250.8499999999999px;color:#1e9e3e" width="6.4" height="6"><path d="M0 0h6.4v1.4L4 3.6V6H2.4V3.6L0 1.4z" fill="currentColor"/></svg>
<div class="a" style="left:33px;top:247.64999999999998px;font-size:9.1px;color:#23973f;line-height:12px">DestPort</div>
<div class="a" style="left:10.2px;top:260.6px;width:8px;height:8px;border-radius:1.5px;border:1px solid #777;background:#fff"></div>
<svg class="a" style="left:23.200000000000003px;top:262.4px;color:#1e9e3e" width="6.4" height="6"><path d="M0 0h6.4v1.4L4 3.6V6H2.4V3.6L0 1.4z" fill="currentColor"/></svg>
<div class="a" style="left:33px;top:259.20000000000005px;font-size:9.1px;color:#23973f;line-height:12px">Direction</div>
<div class="a" style="left:10.2px;top:272.1500000000001px;width:8px;height:8px;border-radius:1.5px;border:1px solid #777;background:#fff"></div>
<svg class="a" style="left:23.200000000000003px;top:273.95000000000005px;color:#1e9e3e" width="6.4" height="6"><path d="M0 0h6.4v1.4L4 3.6V6H2.4V3.6L0 1.4z" fill="currentColor"/></svg>
<div class="a" style="left:33px;top:270.7500000000001px;font-size:9.1px;color:#23973f;line-height:12px">EventID</div>
<div class="a" style="left:490.6px;top:29px;font-size:9.1px;color:#262626;line-height:11px"><b>0</b> to <b>50</b> <span style="font-size:7.25px">of 250 available for paging</span></div>
<svg class="a" style="left:827.3px;top:29px;color:#111" width="8.4" height="8.4"><use href="#i-arrow"/></svg>
<div class="a" style="left:147.5px;top:49.5px;font-size:9.3px;font-weight:bold;color:#262626;line-height:11px">@timestamp</div>
<svg class="a" style="left:206px;top:53.10000000000002px;color:#6db08c" width="4" height="5"><path d="M1 0.5L3 2.5 1 4.5" stroke="currentColor" stroke-width="1.2" fill="none"/></svg>
<svg class="a" style="left:264.2px;top:53.10000000000002px;color:#6db08c" width="4" height="5"><path d="M3 0.5L1 2.5 3 4.5" stroke="currentColor" stroke-width="1.2" fill="none"/></svg>
<div class="a" style="left:270px;top:49.5px;font-size:9.3px;font-weight:bold;color:#262626;line-height:11px">host</div>
<svg class="a" style="left:291.5px;top:53.10000000000002px;color:#6db08c" width="4" height="5"><path d="M1 0.5L3 2.5 1 4.5" stroke="currentColor" stroke-width="1.2" fill="none"/></svg>
<svg class="a" style="left:331.2px;top:53.10000000000002px;color:#6db08c" width="4" height="5"><path d="M3 0.5L1 2.5 3 4.5" stroke="currentColor" stroke-width="1.2" fill="none"/></svg>
<div class="a" style="left:336.7px;top:49.5px;font-size:9.3px;font-weight:bold;color:#262626;line-height:11px">type</div>
<svg class="a" style="left:358.5px;top:53.10000000000002px;color:#6db08c" width="4" height="5"><path d="M1 0.5L3 2.5 1 4.5" stroke="currentColor" stroke-width="1.2" fill="none"/></svg>
<svg class="a" style="left:403px;top:53.10000000000002px;color:#6db08c" width="4" height="5"><path d="M3 0.5L1 2.5 3 4.5" stroke="currentColor" stroke-width="1.2" fill="none"/></svg>
<div class="a" style="left:408.8px;top:49.5px;font-size:9.3px;font-weight:bold;color:#262626;line-height:11px">message</div>
<div class="a" style="left:910.4px;top:49.5px;font-size:9.3px;font-weight:bold;color:#262626;line-height:11px">Actions</div>
<div class="a" style="left:143.8px;top:65.0px;width:810.2px;height:29.2px;background:#f9f9f9;border-top:0"></div>
<div class="a" style="left:149.2px;top:68.19999999999999px;font-size:9.6px;color:#262626;line-height:11.7px">2017-11-<br>10T15:44:53.000-06:00</div>
<div class="a" style="left:266px;top:73.80000000000001px;font-size:9.85px;color:#262626;line-height:12px">192.168.5.62</div>
<div class="a" style="left:333px;top:73.39999999999998px;font-size:9.0px;color:#262626;line-height:12px">apache_access</div>
<div class="a" style="left:405px;top:68.30000000000001px;font-size:9.6px;color:#262626;line-height:11.7px">124.78.45.18 - - [10/Nov/2017:13:44:53 -0800] "GET /wp-admin HTTP/1.0" 500 4963<br><span style="font-size:9.95px">"<span style="color:#2e9e4e">http://www.miles.org/categories/main/main/logi...</span></span></div>
<div class="a" style="left:911.1px;top:72.39999999999998px;width:31px;height:14.4px;border:1px solid #d6d6d6;border-radius:1.5px;background:#fff"><svg class="a" style="left:3.6px;top:2.8px;color:#1a1a1a" width="7.8" height="7.8"><use href="#i-search"/></svg><svg class="a" style="left:20.2px;top:5.6px;color:#111" width="5" height="3"><use href="#i-caret"/></svg></div>
<div class="a" style="left:143.8px;top:94.19999999999999px;width:810.2px;height:29.2px;background:#fff;border-top:1px solid #ddd"></div>
<div class="a" style="left:149.2px;top:97.39999999999998px;font-size:9.6px;color:#262626;line-height:11.7px">2017-11-<br>10T15:44:53.000-06:00</div>
<div class="a" style="left:266px;top:103.0px;font-size:9.85px;color:#262626;line-height:12px">192.168.5.62</div>
<div class="a" style="left:333px;top:102.59999999999997px;font-size:9.0px;color:#262626;line-height:12px">apache_access</div>
<div class="a" style="left:405px;top:97.5px;font-size:9.6px;color:#262626;line-height:11.7px">81.170.150.144 - - [10/Nov/2017:13:44:53 -0800] "GET /search/tag/list HTTP/1.0" 301 4991 "<span style="color:#2e9e4e;font-size:10.1px">http://www.waller-</span><br><span style="font-size:9.95px"><span style="color:#2e9e4e">bailey.c...</span></span></div>
<div class="a" style="left:911.1px;top:101.59999999999997px;width:31px;height:14.4px;border:1px solid #d6d6d6;border-radius:1.5px;background:#fff"><svg class="a" style="left:3.6px;top:2.8px;color:#1a1a1a" width="7.8" height="7.8"><use href="#i-search"/></svg><svg class="a" style="left:20.2px;top:5.6px;color:#111" width="5" height="3"><use href="#i-caret"/></svg></div>
<div class="a" style="left:143.8px;top:123.39999999999998px;width:810.2px;height:29.2px;background:#f9f9f9;border-top:1px solid #ddd"></div>
<div class="a" style="left:149.2px;top:126.60000000000002px;font-size:9.6px;color:#262626;line-height:11.7px">2017-11-<br>10T15:44:53.000-06:00</div>
<div class="a" style="left:266px;top:132.19999999999993px;font-size:9.85px;color:#262626;line-height:12px">192.168.5.62</div>
<div class="a" style="left:333px;top:131.79999999999995px;font-size:9.0px;color:#262626;line-height:12px">apache_access</div>
<div class="a" style="left:405px;top:126.69999999999993px;font-size:9.6px;color:#262626;line-height:11.7px">238.11.217.60 - - [10/Nov/2017:13:44:53 -0800] "POST /posts/posts/explore HTTP/1.0" 200 4870<br><span style="font-size:9.95px">"<span style="color:#2e9e4e">http://www.gonzalez.com/privacy/"</span>; "Moz...</span></div>
<div class="a" style="left:911.1px;top:130.79999999999995px;width:31px;height:14.4px;border:1px solid #d6d6d6;border-radius:1.5px;background:#fff"><svg class="a" style="left:3.6px;top:2.8px;color:#1a1a1a" width="7.8" height="7.8"><use href="#i-search"/></svg><svg class="a" style="left:20.2px;top:5.6px;color:#111" width="5" height="3"><use href="#i-caret"/></svg></div>
<div class="a" style="left:143.8px;top:152.60000000000002px;width:810.2px;height:29.2px;background:#fff;border-top:1px solid #ddd"></div>
<div class="a" style="left:149.2px;top:155.80000000000007px;font-size:9.6px;color:#262626;line-height:11.7px">2017-11-<br>10T15:44:53.000-06:00</div>
<div class="a" style="left:266px;top:161.39999999999998px;font-size:9.85px;color:#262626;line-height:12px">192.168.5.62</div>
<div class="a" style="left:333px;top:161.0px;font-size:9.0px;color:#262626;line-height:12px">apache_access</div>
<div class="a" style="left:405px;top:155.89999999999998px;font-size:9.6px;color:#262626;line-height:11.7px">0.232.158.146 - - [10/Nov/2017:13:44:53 -0800] "GET /app/main/posts HTTP/1.0" 404 4870<br><span style="font-size:9.95px">"<span style="color:#2e9e4e">http://james.net/tags/faq/"</span>; "Mozilla/5.0 (X11; Lin...</span></div>
<div class="a" style="left:911.1px;top:160.0px;width:31px;height:14.4px;border:1px solid #d6d6d6;border-radius:1.5px;background:#fff"><svg class="a" style="left:3.6px;top:2.8px;color:#1a1a1a" width="7.8" height="7.8"><use href="#i-search"/></svg><svg class="a" style="left:20.2px;top:5.6px;color:#111" width="5" height="3"><use href="#i-caret"/></svg></div>
<div class="a" style="left:143.8px;top:181.79999999999995px;width:810.2px;height:29.2px;background:#f9f9f9;border-top:1px solid #ddd"></div>
<div class="a" style="left:149.2px;top:185.0px;font-size:9.6px;color:#262626;line-height:11.7px">2017-11-<br>10T15:44:53.000-06:00</div>
<div class="a" style="left:266px;top:190.5999999999999px;font-size:9.85px;color:#262626;line-height:12px">192.168.5.62</div>
<div class="a" style="left:333px;top:190.19999999999993px;font-size:9.0px;color:#262626;line-height:12px">apache_access</div>
<div class="a" style="left:405px;top:185.0999999999999px;font-size:9.6px;color:#262626;line-height:11.7px">63.149.120.122 - - [10/Nov/2017:13:44:53 -0800] "GET /explore HTTP/1.0" 200 4942 "<span style="color:#2e9e4e">http://gonzalez-</span><br><span style="font-size:9.95px"><span style="color:#2e9e4e">robbins.com/about/"</span>; "Mozilla/5.0...</span></div>
<div class="a" style="left:911.1px;top:189.19999999999993px;width:31px;height:14.4px;border:1px solid #d6d6d6;border-radius:1.5px;background:#fff"><svg class="a" style="left:3.6px;top:2.8px;color:#1a1a1a" width="7.8" height="7.8"><use href="#i-search"/></svg><svg class="a" style="left:20.2px;top:5.6px;color:#111" width="5" height="3"><use href="#i-caret"/></svg></div>
<div class="a" style="left:143.8px;top:211.0px;width:810.2px;height:29.2px;background:#fff;border-top:1px solid #ddd"></div>
<div class="a" style="left:149.2px;top:214.20000000000005px;font-size:9.6px;color:#262626;line-height:11.7px">2017-11-<br>10T15:44:53.000-06:00</div>
<div class="a" style="left:266px;top:219.79999999999995px;font-size:9.85px;color:#262626;line-height:12px">192.168.5.62</div>
<div class="a" style="left:333px;top:219.39999999999998px;font-size:9.0px;color:#262626;line-height:12px">apache_access</div>
<div class="a" style="left:405px;top:214.29999999999995px;font-size:9.6px;color:#262626;line-height:11.7px">96.147.140.8 - - [10/Nov/2017:13:44:53 -0800] "GET /list HTTP/1.0" 200 5164<br><span style="font-size:9.95px">"<span style="color:#2e9e4e">http://www.bonilla.info/tag/search/wp-content/...</span></span></div>
<div class="a" style="left:911.1px;top:218.39999999999998px;width:31px;height:14.4px;border:1px solid #d6d6d6;border-radius:1.5px;background:#fff"><svg class="a" style="left:3.6px;top:2.8px;color:#1a1a1a" width="7.8" height="7.8"><use href="#i-search"/></svg><svg class="a" style="left:20.2px;top:5.6px;color:#111" width="5" height="3"><use href="#i-caret"/></svg></div>
<div class="a" style="left:143.8px;top:240.20000000000005px;width:810.2px;height:29.2px;background:#f9f9f9;border-top:1px solid #ddd"></div>
<div class="a" style="left:149.2px;top:243.4000000000001px;font-size:9.6px;color:#262626;line-height:11.7px">2017-11-<br>10T15:44:53.000-06:00</div>
<div class="a" style="left:266px;top:249.0px;font-size:9.85px;color:#262626;line-height:12px">192.168.5.62</div>
<div class="a" style="left:333px;top:248.60000000000002px;font-size:9.0px;color:#262626;line-height:12px">apache_access</div>
<div class="a" style="left:405px;top:243.5px;font-size:9.6px;color:#262626;line-height:11.7px">210.86.111.48 - - [10/Nov/2017:13:44:53 -0800] "DELETE /search/tag/list HTTP/1.0" 200 5062<br><span style="font-size:9.95px">"<span style="color:#2e9e4e">http://www.macdonald.com/ex...</span></span></div>
<div class="a" style="left:911.1px;top:247.60000000000002px;width:31px;height:14.4px;border:1px solid #d6d6d6;border-radius:1.5px;background:#fff"><svg class="a" style="left:3.6px;top:2.8px;color:#1a1a1a" width="7.8" height="7.8"><use href="#i-search"/></svg><svg class="a" style="left:20.2px;top:5.6px;color:#111" width="5" height="3"><use href="#i-caret"/></svg></div>
<div class="a" style="left:143.8px;top:269.4px;width:810.2px;height:29.2px;background:#fff;border-top:1px solid #ddd"></div>
<div class="a" style="left:149.2px;top:272.6px;font-size:9.6px;color:#262626;line-height:11.7px">2017-11-<br>10T15:44:53.000-06:00</div>
<div class="a" style="left:266px;top:278.19999999999993px;font-size:9.85px;color:#262626;line-height:12px">192.168.5.62</div>
<div class="a" style="left:333px;top:277.79999999999995px;font-size:9.0px;color:#262626;line-height:12px">apache_access</div>
<div class="a" style="left:405px;top:272.69999999999993px;font-size:9.6px;color:#262626;line-height:11.7px">147.55.136.125 - - [10/Nov/2017:13:44:53 -0800] "GET /posts/posts/explore HTTP/1.0" 200 4966<br><span style="font-size:9.95px">"<span style="color:#2e9e4e">http://www.example.com/</span></span></div>
<div class="a" style="left:911.1px;top:276.79999999999995px;width:31px;height:14.4px;border:1px solid #d6d6d6;border-radius:1.5px;background:#fff"><svg class="a" style="left:3.6px;top:2.8px;color:#1a1a1a" width="7.8" height="7.8"><use href="#i-search"/></svg><svg class="a" style="left:20.2px;top:5.6px;color:#111" width="5" height="3"><use href="#i-caret"/></svg></div>
<div class="a" style="left:143.8px;top:64px;width:810.2px;height:2px;background:#ddd"></div>
</div>
<!-- /P4 -->
<div id="sb">
  <svg class="a" style="left:3px;top:4.5px" width="7" height="4"><path d="M0 4L3.5 0.5 7 4z" fill="#a3a3a3"/></svg>
  <div class="a" style="left:2px;top:12px;width:8.6px;height:203px;background:#c1c1c1"></div>
  <svg class="a" style="left:3px;top:661px" width="7" height="4"><path d="M0 0L3.5 3.5 7 0z" fill="#505050"/></svg>
</div>
</body></html>
